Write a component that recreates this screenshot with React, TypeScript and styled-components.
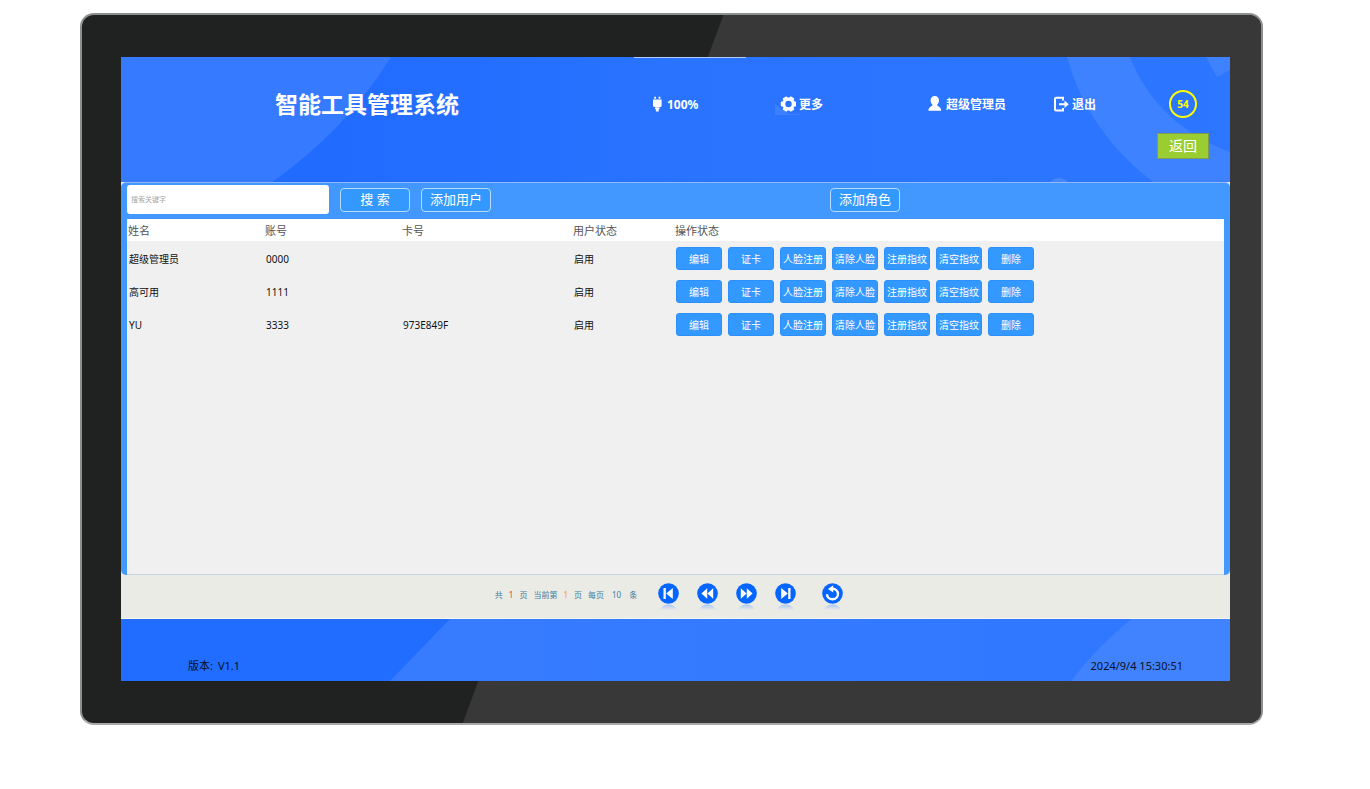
import React from "react";
import styled, { createGlobalStyle, css } from "styled-components";

const GlobalStyle = createGlobalStyle`
  *, *::before, *::after { box-sizing: border-box; }
  body {
    margin: 0;
    background: #ffffff;
    font-family: "Noto Sans", "Noto Sans CJK SC", sans-serif;
    font-size: 10px;
    color: #111111;
  }
  button, input { font-family: inherit; margin: 0; }
  button { cursor: pointer; padding: 0; white-space: nowrap; }
`;

const Page = styled.div`
  min-height: 100vh;
  min-width: 1200px;
  display: flex;
  flex-direction: column;
  padding: 13px 107px 64px 80px;
`;

const Monitor = styled.div`
  flex: 1;
  display: flex;
  flex-direction: column;
  position: relative;
  overflow: hidden;
  padding: 42px 31px 42px 39px;
  border: 2px solid #8b8f8e;
  border-bottom-color: #a9a9a9;
  border-radius: 14px;
  background: #202121;

  &::before {
    content: "";
    position: absolute;
    inset: 0;
    background: #383838;
    clip-path: polygon(54.4% 0, 100% 0, 100% 100%, 32.3% 100%);
  }
`;

const Screen = styled.div`
  position: relative;
  flex: 1;
  display: flex;
  flex-direction: column;
  background: #ebebe6;
`;

const Backdrop = styled.svg`
  position: absolute;
  inset: 0;
  width: 100%;
  height: 100%;
  z-index: -1;
`;

const Header = styled.header`
  position: relative;
  z-index: 0;
  height: 125px;
  padding: 33px 21px 0 154px;
  display: grid;
  grid-template-columns: 377fr 128fr 147fr 126fr 104fr 52px;
  grid-template-rows: 28px 26px;
  row-gap: 15px;
  align-items: center;
  color: #ffffff;
`;

const Title = styled.h1`
  margin: 0;
  font-size: 23px;
  line-height: 28px;
  font-weight: 700;
`;

const navItem = css`
  display: flex;
  align-items: center;
  gap: 3px;
  padding: 1px 0 0;
  border: 0;
  background: none;
  color: #ffffff;
  font-size: 12px;
  line-height: 18px;
  font-weight: 700;
`;

const Status = styled.div`
  ${navItem}
`;

const NavButton = styled.button`
  ${navItem}
`;

const Glyph = styled.svg<{ $w?: number }>`
  width: ${(p) => p.$w ?? 16}px;
  height: 18px;
  fill: currentColor;
`;

const Countdown = styled.div`
  justify-self: center;
  width: 28px;
  height: 28px;
  display: flex;
  align-items: center;
  justify-content: center;
  border: 2px solid #ffff00;
  border-radius: 50%;
  color: #ffff00;
  font-size: 10px;
  font-weight: 700;
`;

const BackButton = styled.button`
  grid-column: 6;
  height: 26px;
  border: 1px solid #7f9a52;
  background: #9acd32;
  color: #ffffff;
  font-size: 14px;
  line-height: 20px;
`;

const Panel = styled.main`
  flex: 1;
  display: flex;
  flex-direction: column;
  padding: 0 6px;
  border-top: 1px solid #8fb9f5;
  border-radius: 5px;
  background: #4298ff;
`;

const Toolbar = styled.div`
  height: 36px;
  padding: 2px 0 5px;
  display: grid;
  grid-template-columns: 703fr 394fr;
  align-items: center;
`;

const ToolGroup = styled.form`
  display: flex;
  align-items: center;
  gap: 11px;
`;

const SearchInput = styled.input`
  width: 202px;
  height: 29px;
  padding: 0 4px;
  border: 0;
  border-radius: 3px;
  background: #ffffff;
  font-size: 7px;
  &::placeholder { color: #a6a6a6; opacity: 1; }
`;

const ToolButton = styled.button`
  width: 70px;
  height: 24px;
  padding-bottom: 1px;
  border: 1px solid #b8dcff;
  border-radius: 4px;
  background: #3399ff;
  color: #ffffff;
  font-size: 13px;
  line-height: 20px;
`;

const TableArea = styled.div`
  flex: 1;
  background: #f0f0f0;
  border-bottom: 1px solid #c3d5e6;
`;

const UserTable = styled.table`
  width: 100%;
  table-layout: fixed;
  border-spacing: 0;
`;

const Col = styled.col<{ $w?: number }>`
  width: ${(p) => (p.$w ? `${p.$w}px` : "auto")};
`;

const HeadCell = styled.th`
  height: 23px;
  padding: 1px 0 0 1px;
  border-bottom: 1px solid #f0f0f0;
  background: #ffffff;
  color: #555555;
  font-size: 11px;
  line-height: 16px;
  font-weight: 400;
  text-align: left;
`;

const Cell = styled.td`
  height: 33px;
  padding: 0 0 0 2px;
  font-size: 10px;
  line-height: 16px;
`;

const Actions = styled.div`
  display: flex;
  gap: 6px;
`;

const ActionButton = styled.button`
  width: 46px;
  height: 23px;
  border: 1px solid #2b90fb;
  border-radius: 3px;
  background: #3399ff;
  color: #ffffff;
  font-size: 10px;
  line-height: 16px;
`;

const Pager = styled.nav`
  height: 44px;
  padding-right: 13px;
  display: flex;
  align-items: center;
  justify-content: center;
  gap: 21px;
  border-bottom: 1px solid #f8f7e8;
`;

const PageInfo = styled.div`
  display: flex;
  align-items: center;
  gap: 6px;
  padding-bottom: 4px;
  color: #3f7d9e;
  font-size: 8px;
  line-height: 12px;
`;

const PageNumber = styled.span<{ $color: string }>`
  color: ${(p) => p.$color};
`;

const PageSize = styled.span`
  padding: 0 2px;
`;

const PageButtons = styled.div`
  display: flex;
  gap: 18px;
`;

const RoundButton = styled.button<{ $apart?: boolean }>`
  width: 21px;
  height: 28px;
  margin-left: ${(p) => (p.$apart ? 8 : 0)}px;
  border: 0;
  background: none;
  svg { display: block; width: 21px; height: 28px; }
`;

const Footer = styled.footer`
  position: relative;
  z-index: 0;
  height: 62px;
  padding: 39px 47px 0 67px;
  display: flex;
  justify-content: space-between;
  color: #0b1024;
  font-size: 11px;
  line-height: 16px;
`;

const Version = styled.span`
  display: flex;
  gap: 5px;
`;

const HeaderArt = () => (
  <Backdrop viewBox="0 0 1109 125" preserveAspectRatio="none" aria-hidden="true">
    <defs>
      <linearGradient id="headerBlue" x1="0" x2="1">
        <stop offset="0.2" stopColor="#216cff" />
        <stop offset="0.5" stopColor="#2973ff" />
        <stop offset="1" stopColor="#2d76ff" />
      </linearGradient>
    </defs>
    <rect width="1109" height="125" fill="url(#headerBlue)" />
    <path d="M0 0H270Q224 74 151 125H0Z" fill="#367aff" />
    <path d="M946 0Q966 74 1032 125H1109V95Q1036 68 1009 0Z" fill="#3e82ff" />
    <path d="M1085 0L1096 20L1109 13V0Z" fill="#3e82ff" />
    <path d="M929 125Q938 117 947 125Z" fill="#4787ff" />
    <path d="M654 47L668 57H679V58H654Z" fill="#3c80ff" />
    <rect x="513" width="112" height="1" fill="#b4cdff" />
  </Backdrop>
);

const FooterArt = () => (
  <Backdrop viewBox="0 0 1109 62" preserveAspectRatio="none" aria-hidden="true">
    <defs>
      <linearGradient id="footerBlue" x1="0" x2="1">
        <stop offset="0" stopColor="#377cff" />
        <stop offset="1" stopColor="#2e77ff" />
      </linearGradient>
    </defs>
    <rect width="1109" height="62" fill="#206dff" />
    <path d="M329 0H1109V62H269Z" fill="url(#footerBlue)" />
    <path d="M1010 0H1109V62H950Q976 28 1010 0Z" fill="#4183ff" />
  </Backdrop>
);

const PlugIcon = () => (
  <Glyph $w={12} viewBox="0 0 12 18">
    <path d="M2.200 0.800h1.800v2H2.200zM6.600 0.800h1.800v2H6.600zM1 3.500h8.600v6.800l-1 .8H2l-1-.8zM3.100 11.300h4.400v1.700l-.8.600v2H3.900v-2l-.8-.6z" />
  </Glyph>
);

const GearIcon = () => (
  <Glyph viewBox="0 0 16 18">
    <circle cx="8.500" cy="8" r="4.800" fill="none" stroke="currentColor" strokeWidth="3.200" />
    {[30, 90, 150, 210, 270, 330].map((angle) => (
      <rect key={angle} x="6" y="0.300" width="5" height="3.200" rx="1" transform={`rotate(${angle} 8.500 8)`} />
    ))}
  </Glyph>
);

const UserIcon = () => (
  <Glyph viewBox="0 0 16 18">
    <path d="M7.800 0c2.500 0 4.200 1.900 4.200 4.300 0 1.900-.8 3.600-2 4.600 0 1.200 4.200 1.500 4.200 5.900H1.400c0-4.400 4.200-4.700 4.200-5.900-1.200-1-2-2.700-2-4.600C3.600 1.900 5.300 0 7.800 0z" />
  </Glyph>
);

const ExitIcon = () => (
  <Glyph viewBox="0 0 16 18">
    <path d="M10 4.500V1.800H3.100Q2 1.800 2 2.900v10.500q0 1.100 1.100 1.100H10V12" fill="none" stroke="currentColor" strokeWidth="2" />
    <path d="M6 7.200h5.500V4.500l4.300 3.700-4.300 3.700V9.200H6z" />
  </Glyph>
);

const pagerShapes = {
  first: <path d="M5.500 5h2.300v11H5.500zM14.800 5v11L8.200 10.500z" />,
  previous: <path d="M10.200 5.200v10.600L4.400 10.500zM16.200 5.200v10.600L10.400 10.500z" />,
  next: <path d="M10.800 5.200v10.600l5.800-5.300zM4.800 5.200v10.600l5.800-5.300z" />,
  last: <path d="M13.200 5h2.300v11h-2.300zM6.200 5v11l6.600-5.500z" />,
  refresh: (
    <>
      <path d="M5 11.200a5.500 5.200 0 1 0 5.500-5.400" fill="none" stroke="#ffffff" strokeWidth="2.400" />
      <path d="M11.200 2.200v7.200L6 5.900z" />
    </>
  ),
};

type PagerKind = keyof typeof pagerShapes;

const PagerIcon = ({ kind }: { kind: PagerKind }) => (
  <svg viewBox="0 0 21 28" aria-hidden="true">
    <defs>
      <linearGradient id={`shine-${kind}`} x1="0" y1="0" x2="0" y2="1">
        <stop offset="0" stopColor="#a8c6f2" />
        <stop offset="1" stopColor="#ebebe6" />
      </linearGradient>
    </defs>
    <path d="M2 27Q4 21.500 10.500 21.500T19 27Z" fill={`url(#shine-${kind})`} />
    <circle cx="10.500" cy="10.500" r="10.300" fill="#0565ff" />
    <g fill="#ffffff">{pagerShapes[kind]}</g>
  </svg>
);

const pagerButtons: { kind: PagerKind; label: string }[] = [
  { kind: "first", label: "首页" },
  { kind: "previous", label: "上一页" },
  { kind: "next", label: "下一页" },
  { kind: "last", label: "末页" },
  { kind: "refresh", label: "刷新" },
];

const columns = [
  { label: "姓名", width: 137 },
  { label: "账号", width: 137 },
  { label: "卡号", width: 171 },
  { label: "用户状态", width: 102 },
  { label: "操作状态", width: undefined },
];

const users = [
  { name: "超级管理员", account: "0000", card: "", state: "启用" },
  { name: "高可用", account: "1111", card: "", state: "启用" },
  { name: "YU", account: "3333", card: "973E849F", state: "启用" },
];

const actions = ["编辑", "证卡", "人脸注册", "清除人脸", "注册指纹", "清空指纹", "删除"];

export default function App() {
  return (
    <>
      <GlobalStyle />
      <Page>
        <Monitor>
          <Screen>
            <Header>
              <HeaderArt />
              <Title>智能工具管理系统</Title>
              <Status>
                <PlugIcon />
                100%
              </Status>
              <NavButton type="button">
                <GearIcon />
                更多
              </NavButton>
              <NavButton type="button">
                <UserIcon />
                超级管理员
              </NavButton>
              <NavButton type="button">
                <ExitIcon />
                退出
              </NavButton>
              <Countdown>54</Countdown>
              <BackButton type="button">返回</BackButton>
            </Header>
            <Panel>
              <Toolbar>
                <ToolGroup onSubmit={(e) => e.preventDefault()}>
                  <SearchInput type="text" placeholder="搜索关键字" aria-label="搜索关键字" />
                  <ToolButton type="submit">搜 索</ToolButton>
                  <ToolButton type="button">添加用户</ToolButton>
                </ToolGroup>
                <ToolButton type="button">添加角色</ToolButton>
              </Toolbar>
              <TableArea>
                <UserTable>
                  <colgroup>
                    {columns.map((c) => (
                      <Col key={c.label} $w={c.width} />
                    ))}
                  </colgroup>
                  <thead>
                    <tr>
                      {columns.map((c) => (
                        <HeadCell key={c.label} scope="col">{c.label}</HeadCell>
                      ))}
                    </tr>
                  </thead>
                  <tbody>
                    {users.map((u) => (
                      <tr key={u.account}>
                        <Cell>{u.name}</Cell>
                        <Cell>{u.account}</Cell>
                        <Cell>{u.card}</Cell>
                        <Cell>{u.state}</Cell>
                        <Cell>
                          <Actions>
                            {actions.map((a) => (
                              <ActionButton key={a} type="button">{a}</ActionButton>
                            ))}
                          </Actions>
                        </Cell>
                      </tr>
                    ))}
                  </tbody>
                </UserTable>
              </TableArea>
            </Panel>
            <Pager aria-label="分页">
              <PageInfo>
                <span>共</span>
                <PageNumber $color="#e23a35">1</PageNumber>
                <span>页</span>
                <span>当前第</span>
                <PageNumber $color="#f59a00">1</PageNumber>
                <span>页</span>
                <span>每页</span>
                <PageSize>10</PageSize>
                <span>条</span>
              </PageInfo>
              <PageButtons>
                {pagerButtons.map((b) => (
                  <RoundButton key={b.kind} type="button" aria-label={b.label} $apart={b.kind === "refresh"}>
                    <PagerIcon kind={b.kind} />
                  </RoundButton>
                ))}
              </PageButtons>
            </Pager>
            <Footer>
              <FooterArt />
              <Version>
                <span>版本:</span>
                <span>V1.1</span>
              </Version>
              <time dateTime="2024-09-04T15:30:51">2024/9/4 15:30:51</time>
            </Footer>
          </Screen>
        </Monitor>
      </Page>
    </>
  );
}
